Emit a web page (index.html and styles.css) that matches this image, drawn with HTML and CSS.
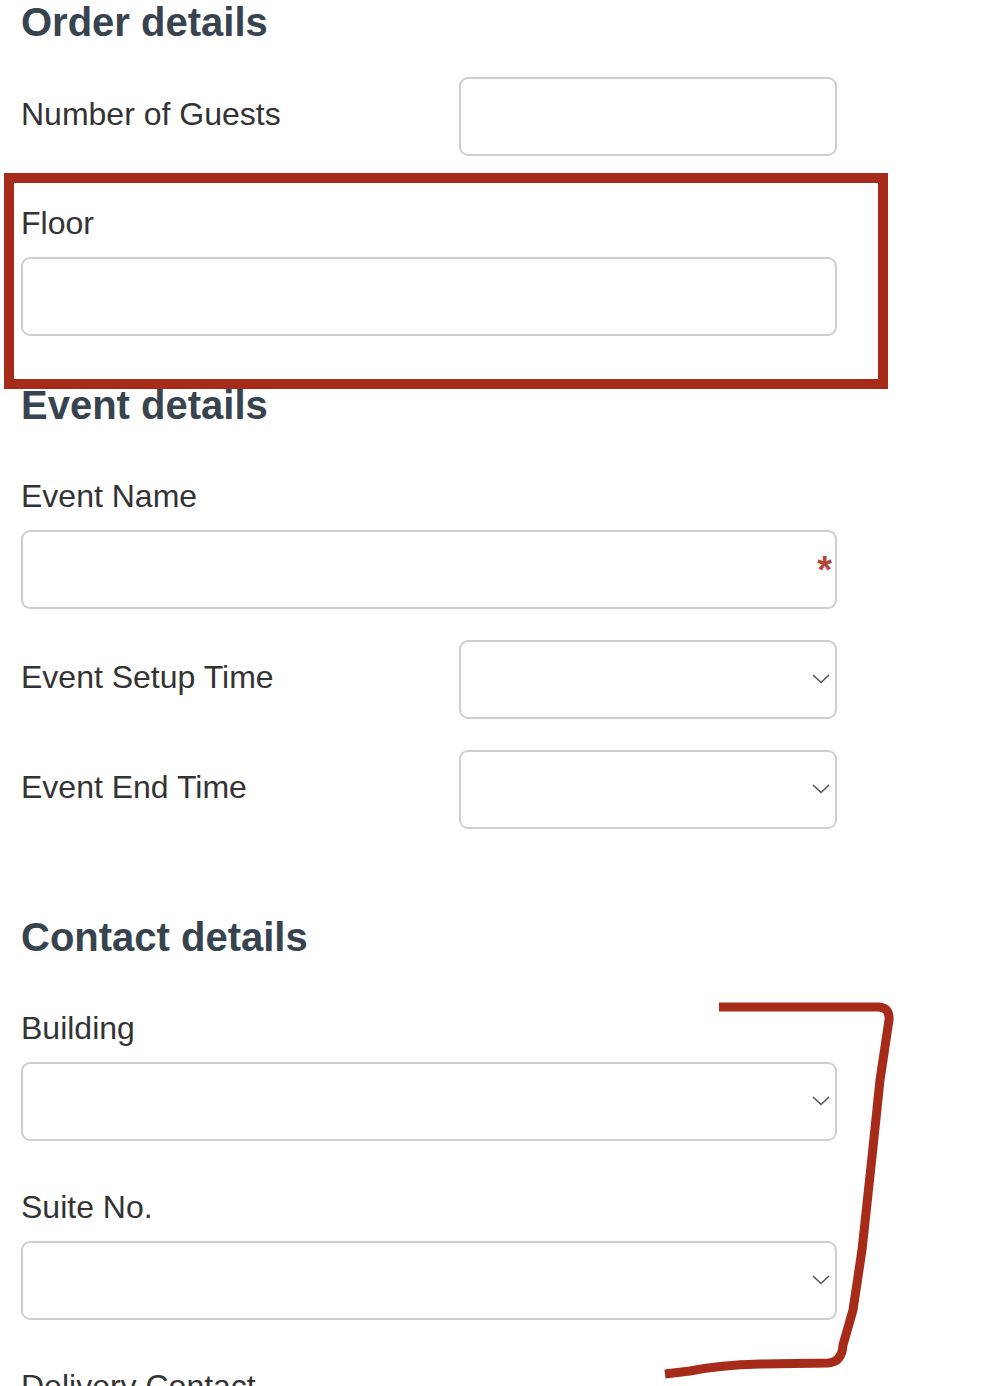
FILE: index.html
```html
<!DOCTYPE html>
<html lang="en">
<head>
  <meta charset="UTF-8">
  <title>Catering Order</title>
  <link rel="stylesheet" href="styles.css">
</head>
<body>
  <div class="page">
    <!-- Order details -->
    <section class="section">
      <h2 class="section-title">Order details</h2>
      <div class="field field-inline">
        <label for="guests">Number of Guests</label>
        <input type="text" id="guests" class="form-input">
      </div>
      <div class="field field-floor">
        <label for="floor">Floor</label>
        <input type="text" id="floor" class="form-input">
      </div>
    </section>

    <!-- Event details -->
    <section class="section section-event">
      <h2 class="section-title">Event details</h2>
      <div class="field field-first">
        <label for="event-name">Event Name</label>
        <div class="input-wrap">
          <input type="text" id="event-name" class="form-input">
          <span class="required">*</span>
        </div>
      </div>
      <div class="field field-inline field-row">
        <label for="setup-time">Event Setup Time</label>
        <div class="input-wrap">
          <select id="setup-time" class="form-input"></select>
          <svg class="chevron" viewBox="0 0 18 10" width="18" height="10"><path d="M1 1 L9 8.5 L17 1" fill="none" stroke="#555" stroke-width="1.6"/></svg>
        </div>
      </div>
      <div class="field field-inline field-row">
        <label for="end-time">Event End Time</label>
        <div class="input-wrap">
          <select id="end-time" class="form-input"></select>
          <svg class="chevron" viewBox="0 0 18 10" width="18" height="10"><path d="M1 1 L9 8.5 L17 1" fill="none" stroke="#555" stroke-width="1.6"/></svg>
        </div>
      </div>
    </section>

    <!-- Contact details -->
    <section class="section section-contact">
      <h2 class="section-title">Contact details</h2>
      <div class="field field-first">
        <label for="building">Building</label>
        <div class="input-wrap">
          <select id="building" class="form-input"></select>
          <svg class="chevron" viewBox="0 0 18 10" width="18" height="10"><path d="M1 1 L9 8.5 L17 1" fill="none" stroke="#555" stroke-width="1.6"/></svg>
        </div>
      </div>
      <div class="field field-next">
        <label for="suite">Suite No.</label>
        <div class="input-wrap">
          <select id="suite" class="form-input"></select>
          <svg class="chevron" viewBox="0 0 18 10" width="18" height="10"><path d="M1 1 L9 8.5 L17 1" fill="none" stroke="#555" stroke-width="1.6"/></svg>
        </div>
      </div>
      <div class="field field-next">
        <label for="delivery-contact">Delivery Contact</label>
      </div>
    </section>
  </div>

  <!-- review annotations -->
  <div class="mark-box"></div>
  <svg class="mark-bracket" width="1006" height="1386" viewBox="0 0 1006 1386">
    <path d="M719 1007 L879 1007 Q890 1008 889 1020 L880 1080 L872 1157 L862 1250 L853 1310 L843 1345 Q842 1362 828 1363 L760 1364 Q720 1365 690 1371 L665 1374" fill="none" stroke="#a72b19" stroke-width="9" stroke-linejoin="round"/>
  </svg>
</body>
</html>
```

FILE: styles.css
```css
/* General */
body {
  margin: 0;
  font-family: "Liberation Sans", Arial, sans-serif;
  background-color: #ffffff;
  color: #333;
}

.page {
  width: 816px;
  padding-left: 21px;
  height: 1386px;
  overflow: hidden;
}

/* Sections */
.section-title {
  margin: 0;
  font-size: 40px;
  line-height: 44px;
  font-weight: bold;
  color: #37444f;
}

.section-event {
  margin-top: 47px;
}

.section-contact {
  margin-top: 86px;
}

/* Fields */
.field label {
  display: block;
  font-size: 32px;
  line-height: 38px;
  color: #333;
  margin-bottom: 15px;
}

.field-inline {
  display: grid;
  grid-template-columns: 438px 378px;
  align-items: center;
  margin-top: 33px;
}

.field-inline label {
  margin-bottom: 6px;
}

.field-row {
  margin-top: 31px;
}

.field-floor {
  margin-top: 48px;
}

.field-first {
  margin-top: 50px;
}

.field-next {
  margin-top: 47px;
}

.form-input {
  display: block;
  width: 100%;
  height: 79px;
  margin: 0;
  padding: 0 16px;
  border: 2px solid #cfcfcf;
  border-radius: 9px;
  background-color: #fff;
  font-size: 28px;
  box-sizing: border-box;
  appearance: none;
  -webkit-appearance: none;
}

.input-wrap {
  position: relative;
}

.chevron {
  position: absolute;
  right: 7px;
  top: 34px;
}

.required {
  position: absolute;
  right: 5px;
  top: 21px;
  font-size: 38px;
  font-weight: bold;
  line-height: 38px;
  color: #b4473b;
}

/* Annotations */
.mark-box {
  position: absolute;
  left: 4px;
  top: 173px;
  width: 884px;
  height: 216px;
  border: 10px solid #a72b19;
  box-sizing: border-box;
}

.mark-bracket {
  position: absolute;
  left: 0;
  top: 0;
  pointer-events: none;
}
```
